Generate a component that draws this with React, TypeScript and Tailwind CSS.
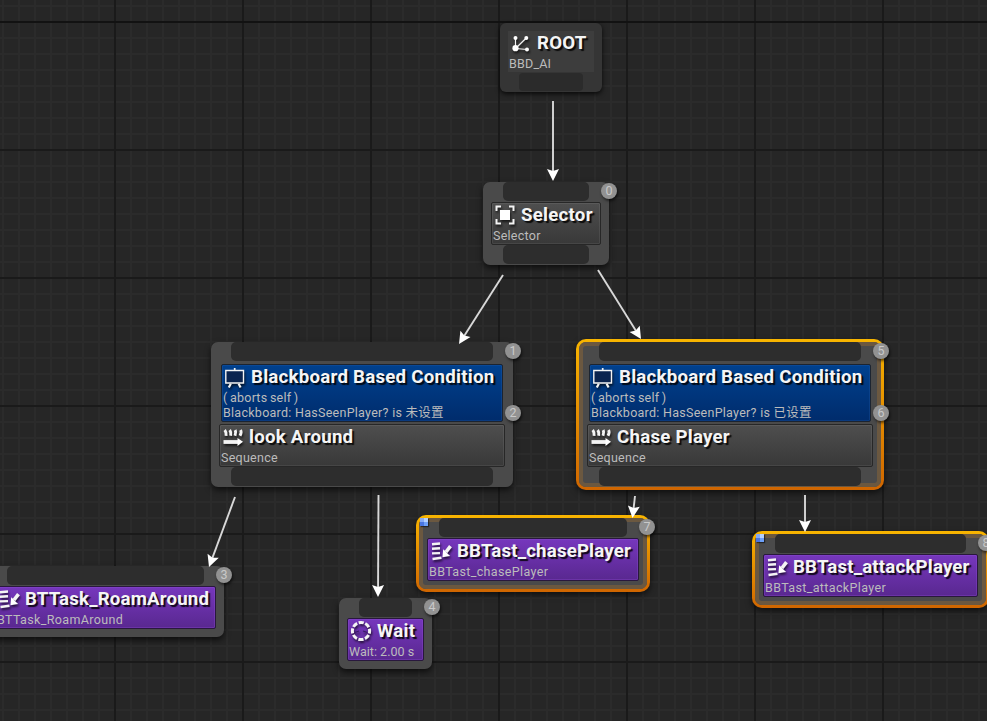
import React from "react";

type IconName = "root" | "selector" | "sequence" | "task" | "wait" | "board";

function Icon({ name }: { name: IconName }) {
  return (
    <svg
      viewBox="0 0 20 20"
      className="h-5 w-5 shrink-0 overflow-visible drop-shadow-[1px_2px_1px_rgba(0,0,0,0.65)]"
      fill="none"
      stroke="#f4f4f4"
      strokeWidth="2"
    >
      {name === "root" && (
        <g>
          <path d="M4.5 15.5V5.5M4.5 15.5L15 5.2M4.5 15.5L16 16.5" strokeWidth="1.2" />
          <g fill="#fff" stroke="none">
            <circle cx="4.5" cy="15.2" r="3.1" />
            <circle cx="4.5" cy="5" r="2" />
            <circle cx="15.3" cy="5" r="2" />
            <circle cx="16" cy="16.5" r="2" />
          </g>
        </g>
      )}
      {name === "selector" && (
        <g>
          <path d="M1.5 6V1.5H6M14 1.5H18.5V6M18.5 14V18.5H14M6 18.5H1.5V14" />
          <rect x="5" y="5" width="10" height="10" fill="#fff" stroke="none" />
        </g>
      )}
      {name === "sequence" && (
        <g>
          <path d="M1.7 3Q3.4 5 3.1 8.8M6.7 3Q8.3 5 7.7 8.8M12.2 3Q13.2 5 12 8.8M17.5 3Q19 5 17 8.8" strokeWidth="2.9" />
          <path d="M0.5 15H16" strokeWidth="3.8" />
          <path d="M14.5 11L20 14.8L14.5 19Z" fill="#fff" stroke="none" />
        </g>
      )}
      {name === "task" && (
        <g>
          <path d="M1 3.2L9 2.5M1 7.8L9 7.3M1 12.4L9 12.1M1.5 18L10.5 16.8" strokeWidth="2.4" />
          <path d="M19.5 5.2L15 11" strokeWidth="3.6" />
          <path d="M11.4 16.2L12.2 8.2L14.4 10.2L17 12.9L19.2 14.9Z" fill="#fff" stroke="none" />
        </g>
      )}
      {name === "wait" && (
        <g>
          <circle cx="10" cy="10" r="8.6" strokeWidth="3" strokeDasharray="5.15 1.6" strokeDashoffset="2.6" />
          <path d="M3.5 11.5L8 10M12 10L16.5 11.5" stroke="#3a1a66" strokeWidth="1.3" />
        </g>
      )}
      {name === "board" && (
        <g>
          <path d="M0.8 3.5H18.5V16H0.8Z" fill="#0b244f" strokeWidth="1.4" />
          <path d="M9.7 1V3.5" strokeWidth="1.7" />
          <path d="M5.8 16.8L3.8 20.6M13.6 16.8L15.6 20.6" strokeWidth="2.2" />
        </g>
      )}
    </svg>
  );
}

function Title({ icon, text, tracking = "tracking-[0.25px]" }: { icon: IconName; text: string; tracking?: string }) {
  return (
    <div className="flex h-[26px] items-center gap-1.5">
      <Icon name={icon} />
      <span
        className={`text-[18.67px] leading-[22px] font-bold text-[#f5f5f5] [text-shadow:2px_2px_1px_rgba(0,0,0,0.85)] ${tracking}`}
      >
        {text}
      </span>
    </div>
  );
}

function Sub({ text, tracking = "tracking-[0.2px]" }: { text: string; tracking?: string }) {
  return <div className={`h-[15px] text-[12.5px] leading-[15px] text-[#bcbcbc] ${tracking}`}>{text}</div>;
}

function Pin() {
  return <div className="mx-5 h-[19px] shrink-0 rounded-[5px] bg-[#2d2d2d]" />;
}

function Badge({ n, place }: { n: number; place: string }) {
  return (
    <div
      className={`absolute -right-2 flex h-4 w-4 items-center justify-center rounded-full bg-[#929292] text-[12.5px] leading-none text-[#c9c9c9] shadow-[1px_2px_3px_rgba(0,0,0,0.6)] ${place}`}
    >
      {n}
    </div>
  );
}

interface NodeProps {
  box: string;
  icon: IconName;
  title: string;
  sub: string;
  index: number;
  condition?: string;
  conditionIndex?: number;
  task?: boolean;
  active?: boolean;
  breakpoint?: boolean;
}

function TreeNode({ box, icon, title, sub, index, condition, conditionIndex, task, active, breakpoint }: NodeProps) {
  const titleTracking = icon === "task" ? "tracking-[0.18px]" : "tracking-[0.25px]";
  const subTracking = icon === "task" ? "tracking-[0.36px]" : icon === "wait" ? "tracking-[0.03px]" : "tracking-[0.26px]";
  return (
    <div className={`absolute ${box}`}>
      {active && (
        <div className="absolute -inset-[3px] rounded-[10px] bg-linear-to-b from-[#f8b500] to-[#cf6500] shadow-[0_3px_6px_rgba(0,0,0,0.6)]" />
      )}
      <div
        className={`relative flex h-full flex-col rounded-[7px] bg-[#4a4a4a] ${
          active ? "shadow-[inset_0_0_0_4px_#6b5840]" : "shadow-[0_3px_6px_rgba(0,0,0,0.65)]"
        }`}
      >
        <Pin />
        {condition && (
          <div className="mx-[10px] mt-[3px] h-[58px] rounded-[2px] border border-[#1c2430] bg-linear-to-b from-[#00418f] to-[#002c6c] pl-[1px] shadow-[inset_0_0_0_1px_rgba(40,100,180,0.25)]">
            <div className="-mt-[1px] pl-[2px]">
              <Title icon="board" text="Blackboard Based Condition" />
            </div>
            <Sub text="( aborts self )" tracking="tracking-[0.2px] [word-spacing:-0.7px]" />
            <Sub text={condition} tracking="tracking-[0.27px]" />
          </div>
        )}
        <div
          className={`mx-2 h-[43px] shrink-0 rounded-[2px] border pl-[1px] ${condition ? "mt-[2px]" : "mt-[1px]"} ${
            task
              ? "border-[#29183d] bg-linear-to-b from-[#7637bd] to-[#592890] shadow-[inset_0_0_0_1px_rgba(150,80,220,0.3)]"
              : "border-[#272727] bg-linear-to-b from-[#4e4e4e] to-[#393939] shadow-[inset_0_0_0_1px_rgba(255,255,255,0.07)]"
          }`}
        >
          <div className="-mt-[1px] pl-[2px]">
            <Title icon={icon} text={title} tracking={titleTracking} />
          </div>
          <Sub text={sub} tracking={subTracking} />
        </div>
        {!task && <Pin />}
      </div>
      {breakpoint && (
        <div className="absolute top-0 left-[1px] grid h-2 w-2 grid-cols-2 bg-[#5b8be8] shadow-[1px_1px_1px_rgba(0,0,0,0.5)]">
          <i className="bg-[#86aaf4]" />
          <i className="bg-[#b4d0ff]" />
          <i className="bg-[#4a76e0]" />
          <i className="bg-[#6da0f8]" />
        </div>
      )}
      <Badge n={index} place="top-[1px]" />
      {conditionIndex !== undefined && <Badge n={conditionIndex} place="top-[63px]" />}
    </div>
  );
}

const links = [
  [553, 101, 553, 181],
  [503, 275, 459, 344],
  [598, 270, 641, 339],
  [235, 497, 209, 567],
  [378.5, 495, 378, 597],
  [635, 496, 632.5, 518],
  [805, 495, 805, 532],
];

function Link({ p }: { p: number[] }) {
  const [x1, y1, x2, y2] = p;
  const a = (Math.atan2(y2 - y1, x2 - x1) * 180) / Math.PI;
  const len = Math.hypot(x2 - x1, y2 - y1);
  return (
    <g transform={`translate(${x1} ${y1}) rotate(${a})`}>
      <path d={`M0 0H${len - 9}`} stroke="#d8d8d8" strokeWidth="1.9" />
      <path d={`M${len} 0L${len - 12} -6L${len - 10} 0L${len - 12} 6Z`} fill="#fff" />
    </g>
  );
}

export default function App() {
  return (
    <div className="relative h-[721px] w-[987px] overflow-hidden bg-[#262626] font-[Roboto,'Noto_Sans_CJK_SC',sans-serif] whitespace-nowrap">
      <svg className="absolute inset-0 h-full w-full">
        <defs>
          <pattern id="minor" x="2" y="5" width="16" height="16" patternUnits="userSpaceOnUse">
            <path d="M0 0H16V2H2V16H0Z" fill="#2b2b2b" />
          </pattern>
          <pattern id="major" x="114" y="21" width="128" height="128" patternUnits="userSpaceOnUse">
            <path d="M0 0H128V2H2V128H0Z" fill="#1a1a1a" />
          </pattern>
        </defs>
        <rect width="987" height="721" fill="url(#minor)" />
        <rect width="987" height="721" fill="url(#major)" />
        <rect y="21" width="987" height="2" fill="#121212" />
      </svg>

      <div className="absolute top-[23px] left-[500px] flex h-[69px] w-[102px] flex-col rounded-[6px] bg-[#353535] pt-2 shadow-[0_2px_5px_rgba(0,0,0,0.8)]">
        <div className="mx-2 h-[41px] bg-[#3d3d3d] pl-[1px]">
          <div className="-mt-[1px] pl-[2px]">
            <Title icon="root" text="ROOT" />
          </div>
          <Sub text="BBD_AI" />
        </div>
        <div className="mx-[19px] mt-[1px] h-[18px] rounded-[4px] bg-[#2b2b2b]" />
      </div>

      <TreeNode box="left-[483px] top-[182px] w-[126px] h-[83px]" icon="selector" title="Selector" sub="Selector" index={0} />
      <TreeNode box="left-[211px] top-[342px] w-[302px] h-[145px]" icon="sequence" title="look Around" sub="Sequence" index={1} condition="Blackboard: HasSeenPlayer? is 未设置" conditionIndex={2} />
      <TreeNode box="left-[579px] top-[342px] w-[302px] h-[145px]" icon="sequence" title="Chase Player" sub="Sequence" index={5} condition="Blackboard: HasSeenPlayer? is 已设置" conditionIndex={6} active />
      <TreeNode box="left-[-13px] top-[566px] w-[237px] h-[71px]" icon="task" title="BTTask_RoamAround" sub="BTTask_RoamAround" index={3} task />
      <TreeNode box="left-[339px] top-[598px] w-[93px] h-[71px]" icon="wait" title="Wait" sub="Wait: 2.00 s" index={4} task />
      <TreeNode box="left-[419px] top-[518px] w-[228px] h-[71px]" icon="task" title="BBTast_chasePlayer" sub="BBTast_chasePlayer" index={7} task active breakpoint />
      <TreeNode box="left-[755px] top-[534px] w-[231px] h-[71px]" icon="task" title="BBTast_attackPlayer" sub="BBTast_attackPlayer" index={8} task active breakpoint />

      <svg className="pointer-events-none absolute inset-0 h-full w-full">
        {links.map((p, i) => (
          <Link key={i} p={p} />
        ))}
      </svg>
    </div>
  );
}
